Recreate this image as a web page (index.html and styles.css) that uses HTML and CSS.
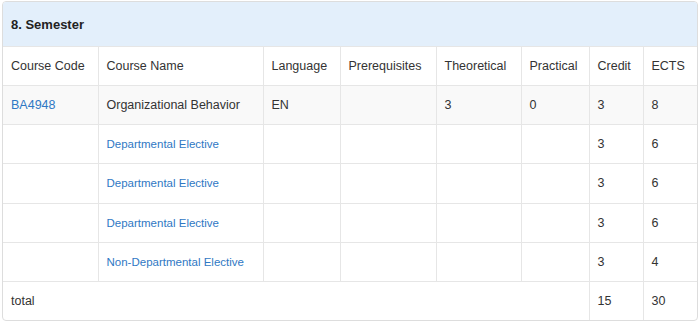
FILE: index.html
```html
<!DOCTYPE html>
<html lang="en">
<head>
<meta charset="utf-8">
<title>8. Semester</title>
<link rel="stylesheet" href="styles.css">
</head>
<body>
<div class="panel">
  <div class="panel-heading">8. Semester</div>
  <table class="courses">
    <colgroup>
      <col class="c1"><col class="c2"><col class="c3"><col class="c4"><col class="c5"><col class="c6"><col class="c7"><col class="c8">
    </colgroup>
    <thead>
      <tr>
        <th>Course Code</th><th>Course Name</th><th>Language</th><th>Prerequisites</th><th>Theoretical</th><th>Practical</th><th>Credit</th><th>ECTS</th>
      </tr>
    </thead>
    <tbody>
      <tr class="striped">
        <td><a class="link" href="#">BA4948</a></td><td>Organizational Behavior</td><td>EN</td><td></td><td>3</td><td>0</td><td>3</td><td>8</td>
      </tr>
      <tr>
        <td></td><td><a class="link small" href="#">Departmental Elective</a></td><td></td><td></td><td></td><td></td><td>3</td><td>6</td>
      </tr>
      <tr>
        <td></td><td><a class="link small" href="#">Departmental Elective</a></td><td></td><td></td><td></td><td></td><td>3</td><td>6</td>
      </tr>
      <tr>
        <td></td><td><a class="link small" href="#">Departmental Elective</a></td><td></td><td></td><td></td><td></td><td>3</td><td>6</td>
      </tr>
      <tr>
        <td></td><td><a class="link small" href="#">Non-Departmental Elective</a></td><td></td><td></td><td></td><td></td><td>3</td><td>4</td>
      </tr>
      <tr>
        <td colspan="6">total</td><td>15</td><td>30</td>
      </tr>
    </tbody>
  </table>
</div>
</body>
</html>
```

FILE: styles.css
```css
html, body {
  margin: 0;
  padding: 0;
  background: #ffffff;
}
body {
  font-family: "Liberation Sans", Arial, sans-serif;
  font-size: 12.5px;
  color: #333333;
}
.panel {
  margin: 1px 2px 0 2px;
  border: 1px solid #dddddd;
  border-radius: 4px;
  overflow: hidden;
  width: 694px;
}
.panel-heading {
  height: 44px;
  display: flex;
  align-items: center;
  padding: 0 8px;
  background: #e3effb;
  font-weight: bold;
  font-size: 13px;
  color: #222222;
}
.courses {
  width: 100%;
  border-collapse: collapse;
  table-layout: fixed;
}
.c1 { width: 95px; }
.c2 { width: 165px; }
.c3 { width: 77px; }
.c4 { width: 96px; }
.c5 { width: 85px; }
.c6 { width: 68px; }
.c7 { width: 54px; }
.c8 { width: auto; }
.courses th,
.courses td {
  height: 38.2px;
  padding: 0 8px;
  text-align: left;
  font-weight: normal;
  vertical-align: middle;
  border-top: 1px solid #e6e6e6;
  border-left: 1px solid #e6e6e6;
  white-space: nowrap;
}
.courses th {
  height: 38px;
}
.courses th:first-child,
.courses td:first-child {
  border-left: none;
}
.striped td {
  background: #f9f9f9;
}
.link {
  color: #2f78c4;
  text-decoration: none;
}
.link.small {
  font-size: 11.5px;
}
```
